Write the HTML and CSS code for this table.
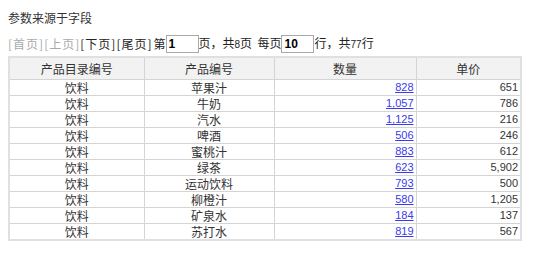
FILE: index.html
```html
<!DOCTYPE html>
<html>
<head>
<meta charset="utf-8">
<link rel="stylesheet" href="styles.css">
</head>
<body>
<div class="title">参数来源于字段</div>
<div class="pager">
  <span class="off">[首页]</span><span class="off">[上页]</span><span class="on">[下页]</span><span class="on">[尾页]</span>
  <span class="lbl first">第</span><input class="box" value="1"><span class="lbl">页，共<span class="num">8</span>页&nbsp; 每页</span><input class="box" value="10"><span class="lbl">行，共<span class="num">77</span>行</span>
</div>
<table class="grid">
  <colgroup><col class="c1"><col class="c2"><col class="c3"><col class="c4"></colgroup>
  <thead>
    <tr><th>产品目录编号</th><th>产品编号</th><th>数量</th><th>单价</th></tr>
  </thead>
  <tbody>
    <tr><td>饮料</td><td>苹果汁</td><td class="n"><a href="#">828</a></td><td class="n">651</td></tr>
    <tr><td>饮料</td><td>牛奶</td><td class="n"><a href="#">1,057</a></td><td class="n">786</td></tr>
    <tr><td>饮料</td><td>汽水</td><td class="n"><a href="#">1,125</a></td><td class="n">216</td></tr>
    <tr><td>饮料</td><td>啤酒</td><td class="n"><a href="#">506</a></td><td class="n">246</td></tr>
    <tr><td>饮料</td><td>蜜桃汁</td><td class="n"><a href="#">883</a></td><td class="n">612</td></tr>
    <tr><td>饮料</td><td>绿茶</td><td class="n"><a href="#">623</a></td><td class="n">5,902</td></tr>
    <tr><td>饮料</td><td>运动饮料</td><td class="n"><a href="#">793</a></td><td class="n">500</td></tr>
    <tr><td>饮料</td><td>柳橙汁</td><td class="n"><a href="#">580</a></td><td class="n">1,205</td></tr>
    <tr><td>饮料</td><td>矿泉水</td><td class="n"><a href="#">184</a></td><td class="n">137</td></tr>
    <tr><td>饮料</td><td>苏打水</td><td class="n"><a href="#">819</a></td><td class="n">567</td></tr>
  </tbody>
</table>
</body>
</html>
```
FILE: styles.css
```css
body {
  margin: 8px;
  background: #fff;
  font-family: "Noto Sans CJK SC", "Noto Sans", sans-serif;
  font-size: 12px;
  color: #333;
}
.title {
  height: 20px;
  line-height: 20px;
}
.pager {
  margin-top: 7px;
  height: 18px;
  display: flex;
  align-items: center;
  white-space: nowrap;
  line-height: 18px;
}
.off, .on { letter-spacing: 1px; }
.off { color: #aaa; }
.on { color: #222; }
.lbl { color: #222; }
.lbl.first { margin-left: 1px; }
.num { font-family: "Liberation Sans", sans-serif; font-size: 10px; }
.box {
  box-sizing: border-box;
  width: 33px;
  height: 18px;
  margin: 0;
  padding: 0 2px;
  border: 1px solid #a9a9a9;
  font-family: "Liberation Sans", sans-serif;
  font-size: 12px;
  font-weight: bold;
  color: #000;
  background: #fff;
}
.grid {
  margin-top: 3px;
  border-collapse: collapse;
  table-layout: fixed;
  width: 512px;
  border: 2px solid #e0e0e0;
}
.c1 { width: 135px; }
.c2 { width: 130px; }
.c3 { width: 142px; }
.c4 { width: 105px; }
.grid th, .grid td {
  border: 1px solid #d4d4d4;
  padding: 0 2px;
  text-align: center;
  color: #333;
  white-space: nowrap;
}
.grid th {
  height: 21px;
  background: #f2f2f2;
  font-weight: normal;
  font-size: 12px;
}
.grid td {
  height: 15px;
  line-height: 15px;
}
.grid td.n {
  text-align: right;
  font-family: "Liberation Sans", sans-serif;
  font-size: 11px;
}
.grid a { color: #3a3af0; text-decoration: underline; }
```
